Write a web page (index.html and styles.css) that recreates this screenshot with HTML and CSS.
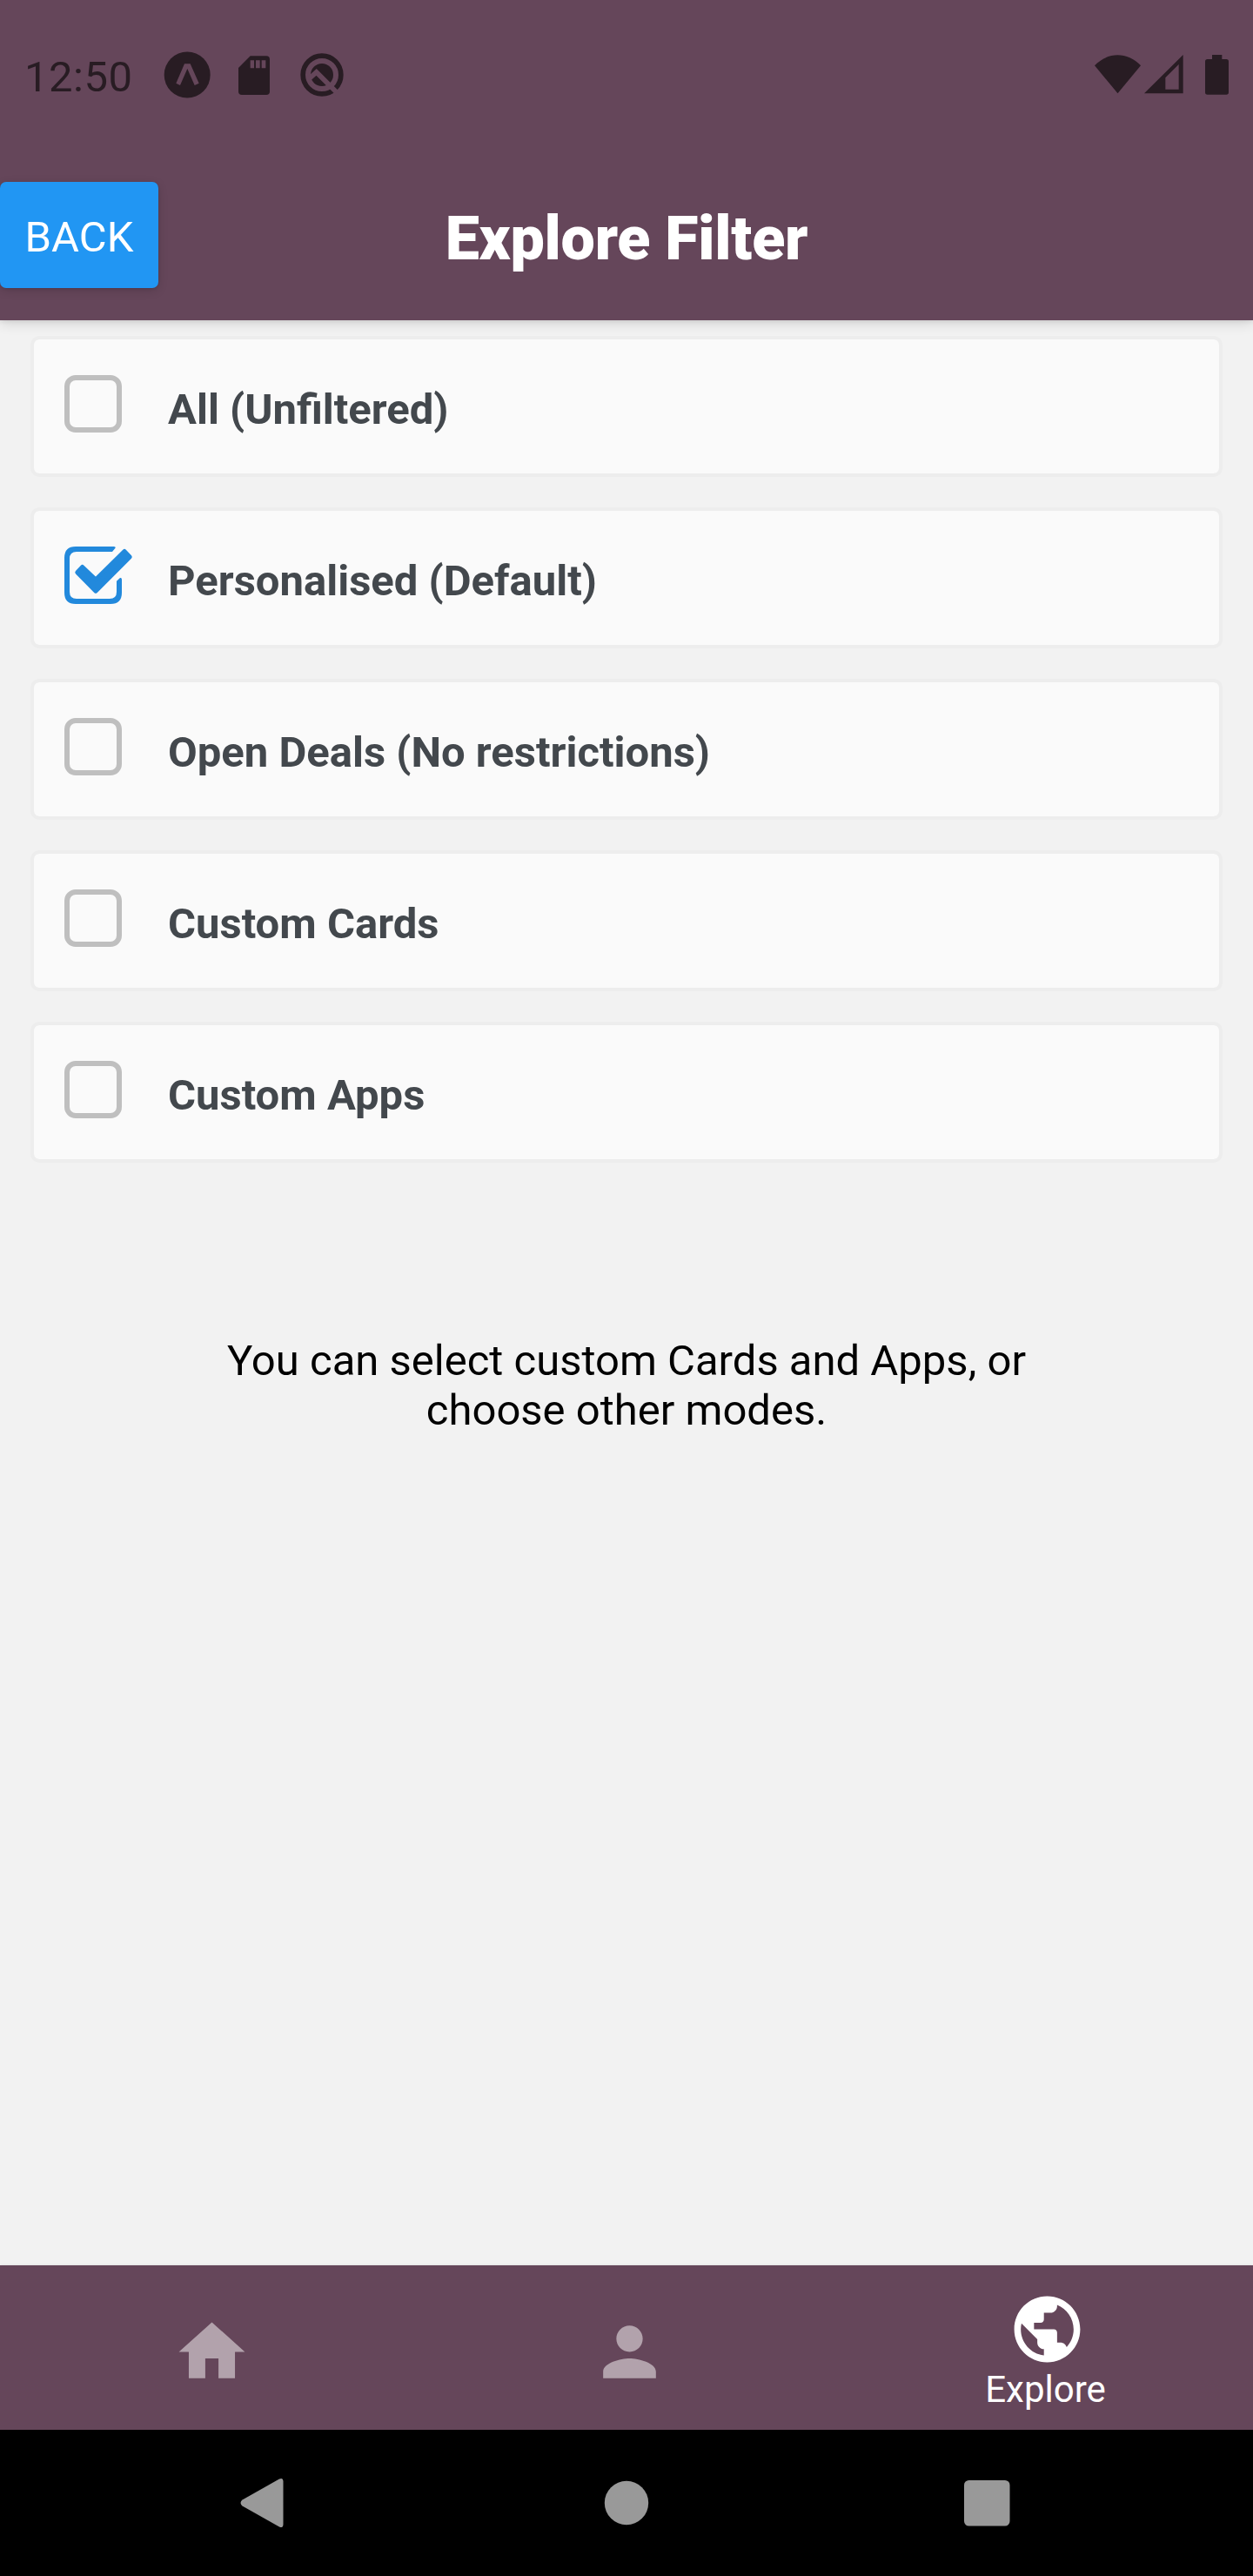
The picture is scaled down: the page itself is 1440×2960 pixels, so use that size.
FILE: index.html
```html
<!DOCTYPE html>
<html lang="en">
<head>
<meta charset="utf-8">
<title>Explore Filter</title>
<link rel="stylesheet" href="styles.css">
</head>
<body>
<div class="screen">
  <header class="header">
    <div class="status">
      <span class="clock">12:50</span>
      <svg class="expo" width="54" height="54" viewBox="565 58 162 162"><circle class="ink" cx="646.5" cy="139" r="79.5"/><path class="cut" d="M637 101h20l30 67-15 7-25-57-25 57-14-7z"/></svg>
      <svg class="sd" width="36" height="46" viewBox="823 71 108 138"><path class="ink" d="M864 72h55q12 0 12 12v110q0 12-12 12h-84q-12 0-12-12v-81z"/><path class="cut" d="M864 87h13v27h-13zM883 87h14v27h-14zM903 87h14v27h-14z"/></svg>
      <svg class="q" width="50" height="50" viewBox="1033 63 150 150"><circle cx="1108" cy="138" r="65.5" fill="none" stroke="#281c23" stroke-width="17"/><circle class="ink" cx="1108" cy="138" r="39"/><path d="M1062 153l27-24 73 73" fill="none" stroke="#65465a" stroke-width="17"/></svg>
      <span class="spacer"></span>
      <svg class="wifi" width="53" height="45" viewBox="114 69 159 135"><path class="ink" d="M193.500 202L114 106C160 58 227 58 273 106z"/></svg>
      <svg class="signal" width="45" height="45" viewBox="286 70 135 135"><path class="ink" fill-rule="evenodd" d="M286 203L420 70v133zM359 149v40h46v-86z"/></svg>
      <svg class="battery" width="27" height="46" viewBox="495 69 81 138"><path class="ink" d="M519 69h34v15h15q8 0 8 8v106q0 8-8 8h-65q-8 0-8-8V92q0-8 8-8h16z"/></svg>
    </div>
    <div class="toolbar">
      <button class="back">BACK</button>
      <h1 class="title">Explore Filter</h1>
    </div>
  </header>
  <main class="content">
    <div class="option"><span class="box"></span><span class="label">All (Unfiltered)</span></div>
    <div class="option"><svg class="checked" width="80" height="66" viewBox="0 0 80 66"><path d="M58.700 1.500L55 6H14Q6 6 6 14V52Q6 60 14 60H52Q60 60 60 52V39.700L64 36Q66 35.500 66 38V53Q66 66 53 66H13Q0 66 0 53V13Q0 0 13 0H57Q59 0 58.700 1.500Z"/><path class="tick" d="M20.700 23.500L14.800 29.700 36 51.200 75.200 12 69 5.500 36 38z"/></svg><span class="label">Personalised (Default)</span></div>
    <div class="option"><span class="box"></span><span class="label">Open Deals (No restrictions)</span></div>
    <div class="option"><span class="box"></span><span class="label">Custom Cards</span></div>
    <div class="option"><span class="box"></span><span class="label">Custom Apps</span></div>
    <p class="hint">You can select custom Cards and Apps, or<br>choose other modes.</p>
  </main>
  <nav class="tabs">
    <div class="tab"><svg class="tab-icon dim" viewBox="0 0 24 24"><path d="M10 20v-6h4v6h5v-8h3L12 3 2 12h3v8z"/></svg></div>
    <div class="tab"><svg class="tab-icon dim" viewBox="0 0 24 24"><path d="M12 12c2.210 0 4-1.790 4-4s-1.790-4-4-4-4 1.790-4 4 1.790 4 4 4zm0 2c-2.670 0-8 1.340-8 4v2h16v-2c0-2.660-5.330-4-8-4z"/></svg></div>
    <div class="tab active"><svg class="tab-icon" viewBox="0 0 24 24"><path d="M12 2C6.480 2 2 6.480 2 12s4.480 10 10 10 10-4.480 10-10S17.520 2 12 2zm-1 17.930c-3.950-.490-7-3.850-7-7.930 0-.620.080-1.210.210-1.790L9 15v1c0 1.100.900 2 2 2v1.930zm6.900-2.540c-.260-.810-1-1.390-1.900-1.390h-1v-3c0-.550-.450-1-1-1H8v-2h2c.550 0 1-.450 1-1V7h2c1.100 0 2-.900 2-2v-.410c2.930 1.190 5 4.060 5 7.410 0 2.080-.800 3.970-2.100 5.390z"/></svg><span class="tab-label">Explore</span></div>
  </nav>
  <div class="sysnav">
    <svg width="50" height="58" viewBox="0 0 50 58"><path d="M45 1.500Q49 -.5 49.500 4V54Q49 58.500 45 56.500L2.500 32.500Q-1.500 29 2.500 25.500z"/></svg>
    <svg class="home-key" width="52" height="52" viewBox="0 0 52 52"><circle cx="26" cy="26" r="25.200"/></svg>
    <svg width="53" height="53" viewBox="0 0 53 53"><rect width="52.500" height="52.500" rx="5.500"/></svg>
  </div>
</div>
</body>
</html>
```

FILE: styles.css
```css
* { box-sizing: border-box; }
body { margin: 0; background: #f2f2f2; font-family: Roboto, "Liberation Sans", sans-serif; }
svg { display: block; flex: none; }
.screen { width: 1440px; height: 2960px; display: flex; flex-direction: column; background: #f2f2f2; }
.header { height: 368px; flex: none; background: #65465a; box-shadow: 0 3px 14px rgba(0,0,0,.14), 0 1px 5px rgba(0,0,0,.08); }
.status { height: 168px; display: flex; align-items: flex-start; padding: 59px 28px 0 28px; }
.ink { fill: #281c23; }
.cut { fill: #65465a; }
.clock { width: 160px; margin-top: 1px; font-size: 49px; line-height: 58px; color: #281c23; letter-spacing: .5px; }
.expo { margin-top: 0; }
.sd { margin: 5px 0 0 32px; }
.q { margin: 2px 0 0 35px; }
.spacer { flex: 1; }
.wifi { margin-top: 4px; }
.signal { margin: 4px 0 0 4px; }
.battery { margin: 4px 0 0 25px; }
.toolbar { height: 200px; display: grid; grid-template-columns: 182px 1fr 182px; align-items: start; padding-top: 41px; }
.back { height: 122px; padding: 5px 0 0; border: 0; border-radius: 7px; background: #2196f3; color: #fff; font: 400 49px/58px Roboto, sans-serif; box-shadow: 0 3px 12px rgba(0,0,0,.14), 0 1px 3px rgba(0,0,0,.1); }
.title { margin: 24px 0 0; text-align: center; color: #fff; font-size: 70px; line-height: 82px; font-weight: 900; letter-spacing: -.25px; }
.content { flex: 1; display: flex; flex-direction: column; gap: 35px; padding: 18px 35px 0; }
.option { height: 162px; flex: none; display: flex; align-items: flex-start; padding: 41px 35px 0; border: 4px solid #ededed; border-radius: 10px; background: #fafafa; background-clip: padding-box; position: relative; }
.box { width: 66px; height: 66px; margin-right: 53px; border: 6px solid #bfbfbf; border-radius: 13px; flex: none; }
.checked { margin-right: 39px; fill: #2289dc; overflow: visible; }
.tick { stroke: #2289dc; stroke-width: 5px; stroke-linejoin: round; }
.label { margin-top: 11px; font-size: 49px; line-height: 58px; font-weight: 700; color: #43484d; white-space: nowrap; }
.hint { margin: 164px 0 0; text-align: center; font-size: 49px; line-height: 57px; color: #000; white-space: nowrap; }
.tabs { height: 189px; flex: none; display: grid; grid-template-columns: repeat(3, 1fr); background: #65465a; box-shadow: 0 -1px 2px rgba(0,0,0,.06); }
.tab { display: flex; flex-direction: column; align-items: center; padding: 54px 0 0 6px; }
.tab.active { padding-top: 28px; }
.tab-icon { width: 91px; height: 91px; fill: #fff; }
.dim { fill: #b2a2ac; }
.tab-label { margin: -1px 3px 0 0; font-size: 42px; line-height: 50px; color: #fff; }
.sysnav { height: 168px; flex: none; display: flex; justify-content: space-between; align-items: center; padding: 0 279px 0 276px; background: #000; fill: #999; }
.home-key { margin-left: 5px; }
```
